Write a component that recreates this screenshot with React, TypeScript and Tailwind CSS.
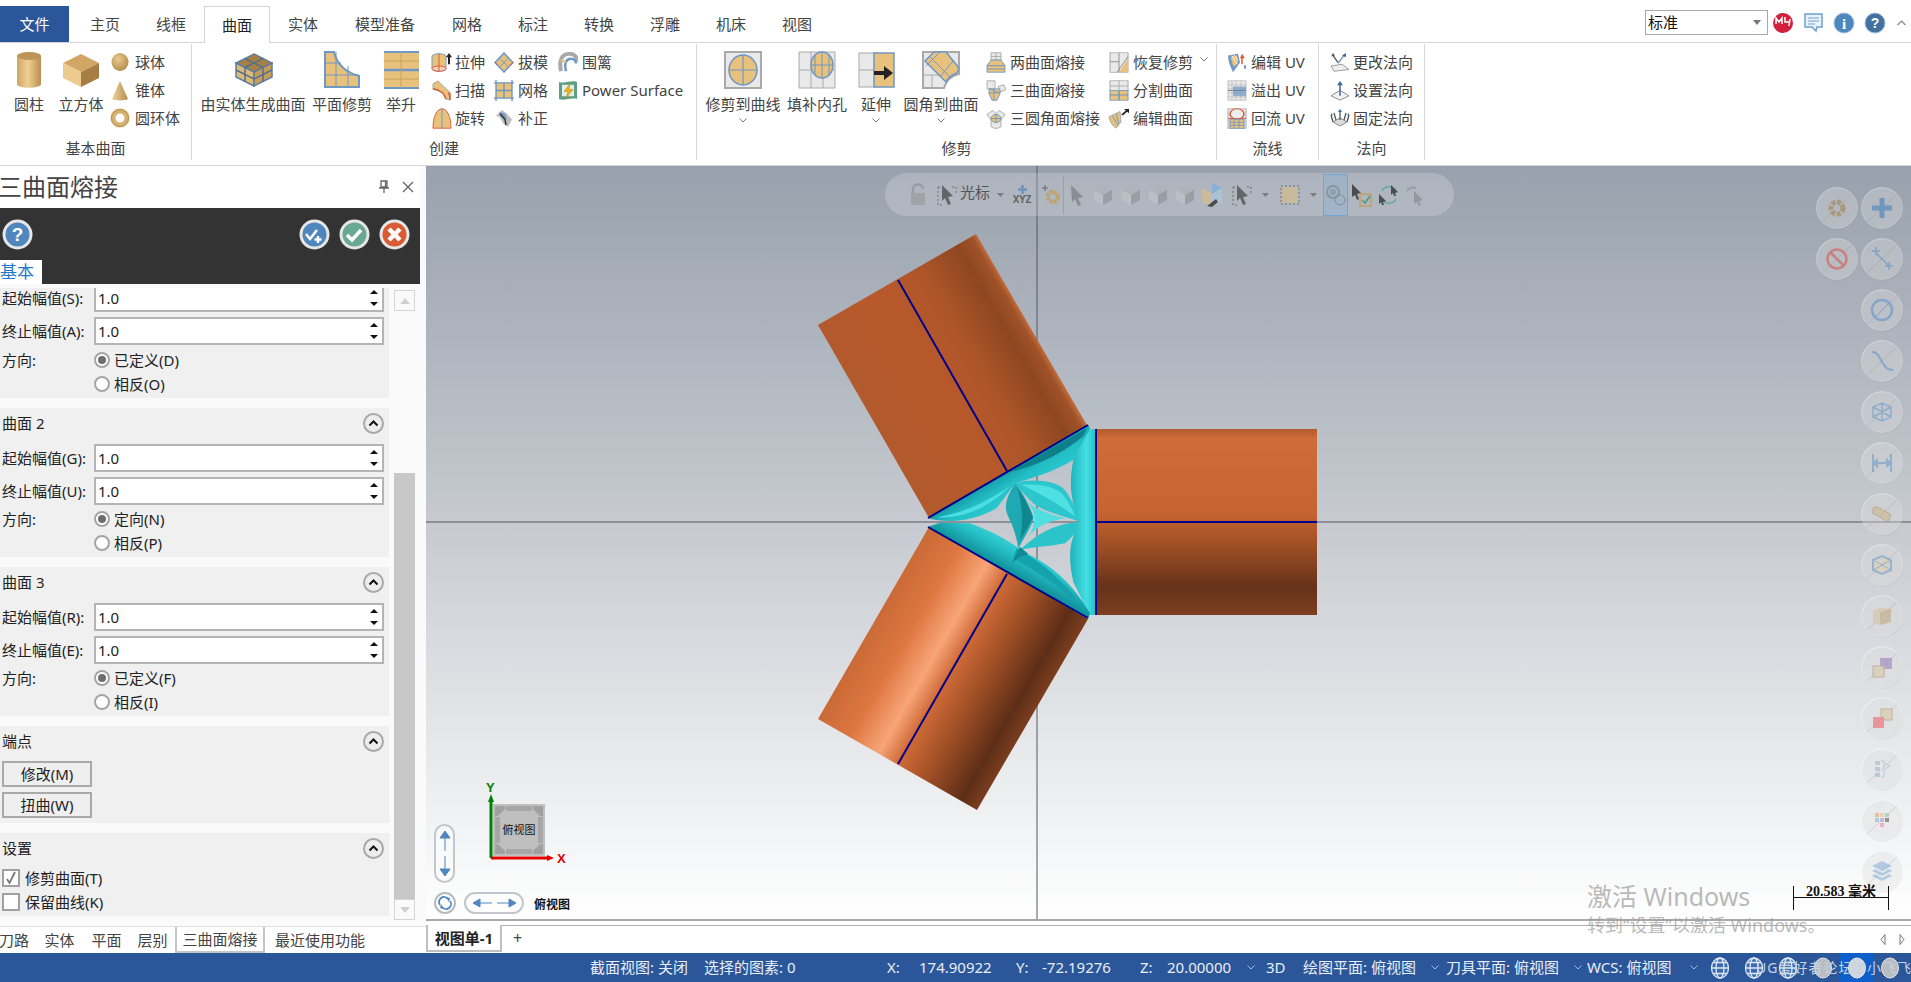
import React from "react";

const T = "#e8c17c";
const B = "#6f98c4";
const G = "#e9e9e9";
const S = "#a9a9a9";

function Ic({ w = 20, h = 20, children }: { w?: number; h?: number; children: React.ReactNode }) {
  return (
    <svg width={w} height={h} viewBox={`0 0 ${w} ${h}`} preserveAspectRatio="none" className="block shrink-0">
      {children}
    </svg>
  );
}

const Cylinder = () => (
  <Ic w={26} h={38}>
    <defs>
      <linearGradient id="cy">
        <stop offset="0" stopColor="#cfa566" />
        <stop offset=".45" stopColor="#efcf92" />
        <stop offset="1" stopColor="#b98f52" />
      </linearGradient>
    </defs>
    <path d="M1 5v28c0 5 24 5 24 0V5z" fill="url(#cy)" />
    <ellipse cx="13" cy="5" rx="12" ry="4" fill="#bd9558" />
  </Ic>
);
const Cube = () => (
  <Ic w={38} h={33}>
    <path d="M19 0l18 9-18 9L1 9z" fill="#d2a766" />
    <path d="M1 9l18 9v15L1 24z" fill="#edcb8f" />
    <path d="M37 9L19 18v15l18-9z" fill="#a67d42" />
  </Ic>
);
const Sphere = () => (
  <Ic w={18} h={20}>
    <defs>
      <radialGradient id="sp" cx=".4" cy=".35" r=".7">
        <stop offset="0" stopColor="#eccb90" />
        <stop offset="1" stopColor="#b18849" />
      </radialGradient>
    </defs>
    <ellipse cx="9" cy="10" rx="8.5" ry="9" fill="url(#sp)" />
  </Ic>
);
const Cone = () => (
  <Ic w={18} h={22}>
    <defs>
      <linearGradient id="cn">
        <stop offset="0" stopColor="#f0d29b" />
        <stop offset="1" stopColor="#b58c4e" />
      </linearGradient>
    </defs>
    <path d="M9 1L17 20c-4 2-12 2-16 0z" fill="url(#cn)" />
  </Ic>
);
const Torus = () => (
  <Ic w={20} h={20}>
    <circle cx="10" cy="10" r="7" fill="none" stroke="#d7b171" strokeWidth="5" />
    <circle cx="10" cy="10" r="8.5" fill="none" stroke="#b9924f" strokeWidth="1" />
  </Ic>
);
const SolidCube = () => (
  <Ic w={39} h={34}>
    <path d="M20 1l18 9-18 9L2 10z" fill="#a98043" stroke="#5c7f9f" strokeWidth="1.5" />
    <path d="M2 10l18 9v14L2 24z" fill="#e0b976" stroke="#5c7f9f" strokeWidth="1.5" />
    <path d="M38 10L20 19v14l18-9z" fill="#c79c5a" stroke="#5c7f9f" strokeWidth="1.5" />
    <path d="M11 5.500l18 9M29 5.500l-18 9M11 14.500v14M29 14.500v14M2 17l18 9 18-9" stroke="#4f708f" strokeWidth="1.500" fill="none" />
  </Ic>
);
const PlaneTrim = () => (
  <Ic w={36} h={38}>
    <path d="M1 1h9c3 12 10 20 25 24v11H1z" fill={T} stroke={B} strokeWidth="2" />
    <path d="M1 12h16M1 24h34M12 1v35M24 15v21" stroke={B} strokeWidth="1" fill="none" />
  </Ic>
);
const Loft = () => (
  <Ic w={35} h={38}>
    <rect x="0" y="1" width="35" height="36" fill={T} />
    <path d="M0 1h35M0 37h35" stroke={B} strokeWidth="2" />
    <path d="M0 19h35" stroke={B} strokeWidth="2.500" />
    <path d="M0 10h35M0 28h35M17 1v18M17 19v18" stroke="#c8a262" strokeWidth="1" />
  </Ic>
);
const TrimCurve = () => (
  <Ic w={38} h={38}>
    <rect x="1" y="1" width="36" height="36" fill={G} stroke={S} strokeWidth="2" />
    <ellipse cx="19" cy="19" rx="14" ry="15" fill={T} stroke={B} strokeWidth="1.500" />
    <path d="M19 4v30M5 19h28" stroke={B} strokeWidth="1.200" />
  </Ic>
);
const FillHoles = () => (
  <Ic w={38} h={38}>
    <rect x="1" y="1" width="36" height="36" fill={G} />
    <path d="M1 19h36M1 1h36v36H1zM13 19v18M25 19v18M13 1v18" stroke={S} strokeWidth="1" fill="none" />
    <ellipse cx="24" cy="14" rx="11" ry="13" fill={T} stroke={B} strokeWidth="1.500" />
    <path d="M24 1v26M13 14h22M17 3v22M31 3v22" stroke={B} strokeWidth="1" fill="none" />
  </Ic>
);
const Extend = () => (
  <Ic w={37} h={38}>
    <rect x="1" y="2" width="17" height="34" fill={G} stroke={S} />
    <path d="M1 19h17" stroke={S} />
    <rect x="16" y="2" width="20" height="34" fill={T} stroke={B} strokeWidth="1.500" />
    <path d="M16 20h10v-5l9 7-9 7v-5H16z" fill="#222" />
  </Ic>
);
const FilletSurf = () => (
  <Ic w={38} h={38}>
    <path d="M1 1h36v22c-9 2-13 7-15 14H1z" fill={G} stroke={S} strokeWidth="2" />
    <path d="M1 24h21M10 24v13M26 1v12" stroke={S} strokeWidth="1" fill="none" />
    <path d="M3 10L12 1h12l13 16-2 5c-6 2-9 5-11 9z" fill={T} stroke={B} strokeWidth="1.500" />
    <path d="M8 6l21 21M18 1L4 15M31 10L18 26" stroke={B} strokeWidth="1" fill="none" />
  </Ic>
);
const Extrude = () => (
  <Ic w={21} h={24}>
    <ellipse cx="8" cy="5" rx="7" ry="3" fill={T} stroke={B} />
    <path d="M1 5v14c0 4 14 4 14 0V5" fill={T} stroke={B} />
    <ellipse cx="8" cy="19" rx="7" ry="3" fill="#f3d0b8" stroke="#d9573a" />
    <path d="M8 2v20" stroke="#d9573a" />
    <path d="M18 14V5" stroke="#222" strokeWidth="2" />
    <path d="M15 6l3-5 3 5z" fill="#222" />
  </Ic>
);
const Draft = () => (
  <Ic w={20} h={22}>
    <path d="M10 1l9 10-9 10-9-10z" fill={T} stroke={B} strokeWidth="1.500" />
    <path d="M5 6l10 10M15 6L5 16" stroke={B} />
    <path d="M1 11l3 3M19 11l-3 3" stroke="#d9573a" />
  </Ic>
);
const Fence = () => (
  <Ic w={20} h={22}>
    <path d="M3 20C1 10 3 3 10 2c6-1 9 3 9 8" fill="none" stroke="#a8a8a8" strokeWidth="4" />
    <path d="M8 20c-2-8 0-13 5-13 3 0 5 2 5 5" fill="none" stroke={B} strokeWidth="2.500" />
    <path d="M3 8l5 3" stroke={T} strokeWidth="2" />
  </Ic>
);
const Sweep = () => (
  <Ic w={20} h={22}>
    <path d="M1 4l5-3 13 13-1 7-4-1C12 13 7 11 1 10z" fill={T} stroke={S} />
    <path d="M1 9c6 1 11 4 13 11M18 21c0-5-1-7-2-8" fill="none" stroke="#d9573a" strokeWidth="1.500" />
  </Ic>
);
const Net = () => (
  <Ic w={20} h={22}>
    <rect x="2" y="3" width="16" height="16" fill={T} />
    <path d="M0 3h20M0 19h20M2 0v22M18 0v22M10 3v16M2 11h16" stroke={B} strokeWidth="1.400" />
  </Ic>
);
const PowerS = () => (
  <Ic w={20} h={22}>
    <path d="M1 2c6 2 12-2 18 0v18c-6-2-12 2-18 0z" fill="#5f9f85" />
    <path d="M4 5h12v12H4z" fill="#dff0ea" />
    <path d="M12 4L6 12h4l-2 7 7-9h-4z" fill="#f2b21b" stroke="#b9790e" strokeWidth=".5" />
  </Ic>
);
const Revolve = () => (
  <Ic w={20} h={26}>
    <path d="M1 25C1 10 5 1 10 1s9 9 9 24z" fill={T} stroke="#d9573a" />
    <path d="M10 1v24" stroke={B} />
  </Ic>
);
const Patch = () => (
  <Ic w={20} h={22}>
    <path d="M2 8l6-6 5 4 5 6-4 8-5-4-3-6z" fill="#bdbdbd" />
    <path d="M5 4l6 2 2 6-5-2z" fill={B} />
    <path d="M6 6l5 6 1 6" stroke="#333" strokeWidth="1.500" fill="none" />
  </Ic>
);
const Blend2 = () => (
  <Ic w={20} h={26}>
    <path d="M5 1h10v9H5z" fill={G} stroke={S} />
    <path d="M5 5.500h10M10 1v9" stroke={S} />
    <path d="M5 10h10l4 7H1z" fill={T} stroke={B} />
    <path d="M1 17h18v8H1z" fill={T} stroke={B} />
    <path d="M1 21h18" stroke={B} />
  </Ic>
);
const Blend3 = () => (
  <Ic w={20} h={26}>
    <path d="M1 1h8v10H1z" fill={G} stroke={S} />
    <path d="M12 8l6-2 2 6-6 3z" fill={G} stroke={S} />
    <path d="M3 11h11v6l-3 8H6l-3-8z" fill={T} stroke={B} />
    <path d="M3 16h11M8 11v14M3 11l11 5" stroke={B} />
  </Ic>
);
const BlendF = () => (
  <Ic w={20} h={26}>
    <path d="M1 8l6-5 3 4 3-4 6 5-4 7v8l-3 2H8l-3-2v-8z" fill={G} stroke={S} />
    <circle cx="10" cy="13" r="5" fill={T} stroke={B} />
    <path d="M10 8v10M5 13h10" stroke={B} />
  </Ic>
);
const Restore = () => (
  <Ic w={20} h={28}>
    <rect x="1" y="1" width="18" height="26" fill={G} stroke={S} />
    <path d="M10 27L19 8v19z" fill={T} />
    <path d="M1 13h9M10 1v26M8 27l11-21" stroke="#888" fill="none" />
  </Ic>
);
const Split = () => (
  <Ic w={20} h={28}>
    <rect x="1" y="1" width="18" height="13" fill={G} stroke={S} />
    <path d="M10 1v13M1 8h18" stroke={S} />
    <rect x="1" y="14" width="18" height="13" fill={T} stroke={B} />
    <path d="M1 20h18M10 14v13" stroke={B} strokeWidth="1.500" />
  </Ic>
);
const EditS = () => (
  <Ic w={22} h={24}>
    <path d="M1 10l11-6 1 12-5 7C4 20 2 16 1 10z" fill={T} stroke={S} />
    <path d="M4 8l6 12M8 6l3 12" stroke={B} />
    <path d="M14 8l5-5" stroke="#222" strokeWidth="2" />
    <path d="M16 1h5v5z" fill="#222" />
  </Ic>
);
const EditUV = () => (
  <Ic w={21} h={24}>
    <path d="M1 4l10-2 2 10-5 8-2 3C3 16 1 10 1 4z" fill={B} />
    <path d="M4 5l6-1 1 8-4 5C5 13 4 9 4 5z" fill={T} />
    <path d="M5 4l5 10M7 3l4 7" stroke="#fff" strokeWidth=".8" />
    <path d="M15 14V6" stroke="#d9573a" strokeWidth="1.500" />
    <path d="M13 7l2-5 3 5z" fill="#d9573a" />
    <path d="M17 15h2v4h-2z" fill={B} />
  </Ic>
);
const OverUV = () => (
  <Ic w={20} h={26}>
    <rect x="1" y="1" width="18" height="24" fill={G} stroke="#bdbdbd" />
    <path d="M1 6h18M1 11h18M1 16h18M1 21h18M5 1v24M9 1v24M14 1v24" stroke="#b5b5b5" strokeWidth=".7" />
    <rect x="6" y="8" width="13" height="12" fill={B} opacity=".7" />
    <path d="M1 13h18" stroke="#5d7fa0" />
  </Ic>
);
const ReUV = () => (
  <Ic w={20} h={28}>
    <rect x="1" y="1" width="18" height="26" fill={G} stroke={S} />
    <circle cx="10" cy="8" r="7" fill="#eee" stroke="#d9573a" strokeWidth="1.500" />
    <path d="M1 14h18" stroke="#d9573a" />
    <rect x="3" y="15" width="14" height="12" fill={T} stroke={B} />
    <path d="M3 19h14M3 23h14M7 15v12M12 15v12" stroke={B} />
  </Ic>
);
const ChangeN = () => (
  <Ic w={20} h={24}>
    <path d="M4 22l-3-6 11-2 7 6z" fill="#eee" stroke="#999" />
    <path d="M8 12L3 4" stroke="#555" strokeWidth="1.500" />
    <path d="M8 13l6-9" stroke={B} strokeWidth="1.500" />
    <path d="M12 4l4-3v5z" fill="#3d6a9c" />
    <path d="M1 5l2-4 2 3z" fill="#555" />
  </Ic>
);
const SetN = () => (
  <Ic w={20} h={24}>
    <path d="M10 12l9 6-9 5-9-5z" fill="#f2f2f2" stroke="#888" />
    <path d="M10 18V5" stroke="#3d6a9c" strokeWidth="1.500" />
    <path d="M7 6l3-5 3 5z" fill="#3d6a9c" />
  </Ic>
);
const FixN = () => (
  <Ic w={20} h={20}>
    <path d="M3 14l7 4 7-4-7-4z" fill="#ddd" stroke="#888" />
    <path d="M3 14L1 7M17 14l2-7M10 12V3M6 12L4 5M14 12l2-7" stroke="#555" strokeWidth="1.300" />
    <path d="M10 1l2 3H8zM1 5l2 2-2 1zM19 5l-2 2 2 1z" fill="#3d6a9c" />
  </Ic>
);

function Large({ w, icon, label, chev }: { w: string; icon: React.ReactNode; label: string; chev?: boolean }) {
  return (
    <div className={`${w} flex flex-col items-center pt-[7px]`}>
      <div className="h-[38px] flex items-center">{icon}</div>
      <div className="mt-[5px] h-[20px] leading-[20px] whitespace-nowrap">{label}</div>
      {chev && <Chev className="mt-[4px]" />}
    </div>
  );
}
function Chev({ className = "", color = "#777" }: { className?: string; color?: string }) {
  return (
    <svg width="8" height="5" viewBox="0 0 8 5" className={`block shrink-0 ${className}`}>
      <path d="M.5.500L4 4 7.500.500" fill="none" stroke={color} />
    </svg>
  );
}
function Small({ icon, label, iw = "w-[20px]", gap = "mr-[4px]", chev }: { icon: React.ReactNode; label: string; iw?: string; gap?: string; chev?: boolean }) {
  return (
    <div className="flex items-center h-[28px] whitespace-nowrap">
      <div className={`${iw} ${gap} flex justify-center items-center shrink-0 [&>svg]:max-h-[21px]`}>{icon}</div>
      <span>{label}</span>
      {chev && <Chev className="ml-[7px] -mt-[6px]" />}
    </div>
  );
}
function Group({ w, label, children }: { w: string; label: string; children: React.ReactNode }) {
  return (
    <div className={`${w} h-[116px] shrink-0 flex flex-col border-r border-[#d8d8d8]`}>
      <div className="h-[92px] flex">{children}</div>
      <div className="h-[24px] leading-[24px] text-center">{label}</div>
    </div>
  );
}

function Field({ label }: { label: string }) {
  return (
    <div className="flex items-center">
      <div className="w-[94px] pl-[2px] whitespace-nowrap">{label}</div>
      <div className="w-[290px] h-[28px] bg-white border-2 border-[#b4b4b4] flex items-center justify-between pl-[2px] pr-[3px]">
        <span>1.0</span>
        <svg width="10" height="20" viewBox="0 0 10 20" className="block">
          <path d="M5 2l4 4H1zM5 18l4-4H1z" fill="#111" />
        </svg>
      </div>
    </div>
  );
}
function Radio({ on, label, side }: { on?: boolean; label: string; side?: string }) {
  return (
    <div className="h-[24px] flex items-center">
      <div className="w-[94px] pl-[2px] whitespace-nowrap">{side}</div>
      <span className="w-[16px] h-[16px] rounded-full border-2 border-[#a5a5a5] bg-white flex items-center justify-center">
        {on && <span className="w-[8px] h-[8px] rounded-full bg-[#6e6e6e]" />}
      </span>
      <span className="ml-[4px]">{label}</span>
    </div>
  );
}
function Header({ label }: { label: string }) {
  return (
    <div className="h-[30px] flex items-center justify-between pl-[2px] pr-[5px]">
      <span>{label}</span>
      <span className="w-[21px] h-[21px] rounded-full border-2 border-[#a8a8a8] bg-[#ededed] flex items-center justify-center">
        <svg width="11" height="7" viewBox="0 0 11 7" className="block">
          <path d="M1.500 5.500l4-4 4 4" fill="none" stroke="#111" strokeWidth="2" />
        </svg>
      </span>
    </div>
  );
}
function Btn({ label }: { label: string }) {
  return (
    <div className="ml-[2px] w-[90px] h-[26px] border-2 border-[#a9a9a9] bg-[#efefef] flex items-center justify-center">{label}</div>
  );
}
function Check({ on, label }: { on?: boolean; label: string }) {
  return (
    <div className="h-[24px] flex items-center pl-[2px]">
      <span className="w-[18px] h-[18px] border-2 border-[#a0a0a0] bg-white flex items-center justify-center">
        {on && (
          <svg width="12" height="14" viewBox="0 0 12 14" className="block">
            <path d="M2 8l2.500 4L10 1" fill="none" stroke="#777" strokeWidth="1.800" />
          </svg>
        )}
      </span>
      <span className="ml-[5px]">{label}</span>
    </div>
  );
}
function ActionIcon({ color, children }: { color: string; children: React.ReactNode }) {
  return (
    <svg width="31" height="31" viewBox="0 0 31 31" className="block">
      <circle cx="15.500" cy="15.500" r="13.500" fill={color} stroke="#e6e6e6" strokeWidth="3" />
      {children}
    </svg>
  );
}

function RoundBtn({ children }: { children: React.ReactNode }) {
  return (
    <svg width="43" height="43" viewBox="0 0 43 43" className="block">
      <circle cx="21.500" cy="22" r="20.500" fill="#000" opacity=".07" />
      <circle cx="21" cy="21" r="20.500" fill="#fff" fillOpacity=".32" stroke="#fff" strokeOpacity=".25" />
      <path d="M6 35L36 7" stroke="#888" strokeOpacity=".25" />
      <g opacity=".72">{children}</g>
    </svg>
  );
}

function Globe({ kind }: { kind: number }) {
  return (
    <svg width="22" height="24" viewBox="0 0 22 24" className="block">
      {kind < 3 ? (
        <g fill="none" stroke="#dfe8f5" strokeWidth="1.300">
          <ellipse cx="11" cy="12" rx="8.500" ry="10" fill="#3b6cb0" />
          <ellipse cx="11" cy="12" rx="4" ry="10" />
          <path d="M2.500 12h17M4 6.500h14M4 17.500h14" />
        </g>
      ) : (
        <ellipse cx="11" cy="12" rx="8.500" ry="10" fill={kind === 4 ? "#cfd6de" : "#b9bcc0"} stroke="#e3e5e8" />
      )}
    </svg>
  );
}

function Scene() {
  return (
    <svg className="absolute inset-0 w-full h-full" viewBox="426 166 1485 753" preserveAspectRatio="none">
      <defs>
        <linearGradient id="cr" gradientUnits="userSpaceOnUse" x1="0" y1="429" x2="0" y2="615">
          <stop offset="0" stopColor="#b25a2d" />
          <stop offset=".05" stopColor="#cf6c38" />
          <stop offset=".45" stopColor="#c56431" />
          <stop offset=".6" stopColor="#a65226" />
          <stop offset=".85" stopColor="#65321a" />
          <stop offset="1" stopColor="#7d3f1f" />
        </linearGradient>
        <linearGradient id="cu" gradientUnits="userSpaceOnUse" x1="818" y1="325" x2="976" y2="234">
          <stop offset="0" stopColor="#b25a2d" />
          <stop offset=".4" stopColor="#b9592b" />
          <stop offset=".65" stopColor="#ad5529" />
          <stop offset=".88" stopColor="#8e4721" />
          <stop offset=".97" stopColor="#a05228" />
          <stop offset="1" stopColor="#c06a3a" />
        </linearGradient>
        <linearGradient id="cl" gradientUnits="userSpaceOnUse" x1="818" y1="719" x2="977" y2="810">
          <stop offset="0" stopColor="#c96a36" />
          <stop offset=".2" stopColor="#de7640" />
          <stop offset=".38" stopColor="#f8a578" />
          <stop offset=".5" stopColor="#cf6a37" />
          <stop offset=".7" stopColor="#9a4c24" />
          <stop offset=".9" stopColor="#5d2e17" />
          <stop offset="1" stopColor="#7a3d1e" />
        </linearGradient>
        <linearGradient id="t1" gradientUnits="userSpaceOnUse" x1="300" y1="200" x2="360" y2="300">
          <stop offset="0" stopColor="#128b95" />
          <stop offset=".5" stopColor="#22bcc5" />
          <stop offset="1" stopColor="#2cced2" />
        </linearGradient>
        <linearGradient id="t2" gradientUnits="userSpaceOnUse" x1="510" y1="0" x2="587" y2="0">
          <stop offset="0" stopColor="#1eb2bb" />
          <stop offset=".65" stopColor="#43dfe3" />
          <stop offset="1" stopColor="#22bec7" />
        </linearGradient>
        <linearGradient id="t3" gradientUnits="userSpaceOnUse" x1="350" y1="530" x2="400" y2="440">
          <stop offset="0" stopColor="#12909a" />
          <stop offset=".5" stopColor="#24bec6" />
          <stop offset="1" stopColor="#3fdadd" />
        </linearGradient>
      </defs>
      <path d="M1037 166V921" stroke="#55595e" strokeWidth="1" />
      <path d="M426 522H1911" stroke="#55595e" strokeWidth="1" />
      <path d="M818 325L976 234 1088 427 929 518z" fill="url(#cu)" />
      <path d="M929 527L1088 619 977 810 818 719z" fill="url(#cl)" />
      <rect x="1096" y="429" width="221" height="186" fill="url(#cr)" />
      <g transform="translate(900 400) scale(.3333)">
        <path d="M565 75L85 355C150 372 225 362 290 325L345 250C420 228 480 205 520 180 545 135 565 105 570 85z" fill="url(#t1)" />
        <path d="M560 85L330 215C420 198 500 150 550 108z" fill="#0f7f8a" />
        <path d="M110 352C180 342 250 312 330 258 280 312 200 358 110 352z" fill="#4adfe2" />
        <path d="M587 88H570C550 125 530 155 520 180 508 240 510 290 530 340L540 368C505 420 505 480 520 545 540 585 555 620 570 645H587z" fill="url(#t2)" />
        <path d="M85 380L565 655 570 640C530 570 470 500 370 455 340 430 280 395 210 370L120 368z" fill="url(#t3)" />
        <path d="M350 445C420 485 500 545 560 640 510 585 440 530 340 475z" fill="#14a3ad" />
        <path d="M345 250C400 232 470 245 490 265 515 295 530 330 540 365 500 350 440 340 400 310 380 290 360 270 345 250z" fill="#2cc6cc" />
        <path d="M365 255C410 250 460 258 485 280 505 305 520 330 525 350 490 320 420 280 365 255z" fill="#4fe0e3" />
        <path d="M345 250C320 290 310 320 325 350 340 380 350 410 355 445 380 400 400 370 400 350 385 310 365 270 345 250z" fill="#1fa9b2" />
        <path d="M350 262C365 300 372 360 360 420 378 390 395 365 398 350 385 315 368 285 350 262z" fill="#0f8791" />
        <path d="M540 365C480 370 420 390 360 450 400 440 450 440 495 430 520 410 535 385 540 365z" fill="#2ac4ca" />
        <path d="M380 305C400 320 430 340 500 355 450 360 410 380 385 410 410 370 410 335 380 305z" fill="#50dee1" />
        <path d="M335 490L360 440 385 462 360 470z" fill="#0f8a94" />
      </g>
      <g stroke="#00008b" strokeWidth="2" fill="none">
        <path d="M1088 425L928 518M928 527L1088 618M1096 429V615M1096 522H1317" />
        <path d="M898 280L1007 471M1007 574L898 764" />
      </g>
      <path d="M491 858V800" stroke="#008000" strokeWidth="3" />
      <path d="M488 802l3-8 3 8z" fill="#008000" />
      <path d="M491 858H548" stroke="#e00000" strokeWidth="3" />
      <path d="M547 855l7 3-7 3z" fill="#e00000" />
    </svg>
  );
}

const Tip = ({ c }: { c: React.ReactNode }) => <div className="w-[26px] h-[30px] flex items-center justify-center">{c}</div>;

function FloatBar() {
  const arrow = (
    <svg width="20" height="24" viewBox="0 0 20 24" className="block">
      <path d="M1 4v18h4M15 4h4v6M1 4h3" fill="none" stroke="#555" strokeDasharray="2 2" />
      <path d="M5 2l11 11-5 1 3 7-3 1-3-7-3 3z" fill="#444" />
    </svg>
  );
  const cube = (
    <svg width="22" height="24" viewBox="0 0 22 24" className="block">
      <path d="M11 2l9 5-9 5-9-5z" fill="#aeb3b8" />
      <path d="M2 7l9 5v10l-9-5z" fill="#bfc3c8" />
      <path d="M20 7l-9 5v10l9-5z" fill="#8f959c" />
    </svg>
  );
  const tri = (
    <svg width="7" height="4" viewBox="0 0 7 4" className="block"><path d="M0 0h7L3.500 4z" fill="#444" /></svg>
  );
  return (
    <div className="absolute left-[459px] top-[7px] w-[569px] h-[43px] rounded-full bg-white/20 flex items-center pl-[20px]">
      <div className="opacity-40"><Tip c={<svg width="18" height="24" viewBox="0 0 18 24" className="block"><path d="M4 10V6c0-6 10-6 10 0" fill="none" stroke="#777" strokeWidth="2.500" /><rect x="2" y="10" width="14" height="12" fill="#888" /></svg>} /></div>
      <div className="ml-[3px] opacity-70"><Tip c={arrow} /></div>
      <div className="w-[31px] text-[15px] text-[#555] whitespace-nowrap -mt-[4px]">光标</div>
      <div className="ml-[3px] w-[12px] flex justify-center opacity-50">{tri}</div>
      <div className="ml-[4px] w-[24px] flex flex-col items-center opacity-70">
        <svg width="9" height="9" viewBox="0 0 9 9" className="block"><path d="M4.500 0v9M0 4.500h9" stroke="#4f86bd" strokeWidth="2.500" /></svg>
        <span className="text-[10px] leading-[11px] font-bold text-[#444]">XYZ</span>
      </div>
      <div className="ml-[5px] w-[24px] flex justify-center opacity-70">
        <svg width="20" height="24" viewBox="0 0 20 24" className="block"><circle cx="12" cy="14" r="5" fill="none" stroke="#c59a4c" strokeWidth="4" strokeDasharray="3 1" /><path d="M1 5h6M4 2v6" stroke="#444" /></svg>
      </div>
      <div className="w-px h-[38px] bg-[#8c939b] opacity-60" />
      <div className="opacity-50"><Tip c={<svg width="16" height="24" viewBox="0 0 16 24" className="block"><path d="M2 2l12 12-5 1 3 7-3 1-3-7-3 3z" fill="#666" /></svg>} /></div>
      <div className="opacity-70"><Tip c={cube} /></div>
      <div className="ml-[2px] opacity-70"><Tip c={cube} /></div>
      <div className="ml-[1px] opacity-70"><Tip c={cube} /></div>
      <div className="ml-[1px] opacity-70"><Tip c={cube} /></div>
      <div className="ml-[1px] opacity-80">
        <Tip c={<svg width="22" height="26" viewBox="0 0 22 26" className="block"><path d="M11 1l10 5-10 6z" fill="#7fb0d8" /><path d="M1 6l10 6v13L1 20z" fill="#d4bd92" /><path d="M21 6l-10 6v13l10-5z" fill="#a9c6de" /><path d="M6 24l9-7 2 3-6 5z" fill="#333" /></svg>} />
      </div>
      <div className="ml-[4px] opacity-70"><Tip c={arrow} /></div>
      <div className="ml-[4px] w-[12px] flex justify-center opacity-50">{tri}</div>
      <div className="ml-[6px]">
        <Tip c={<svg width="22" height="24" viewBox="0 0 22 24" className="block"><rect x="3" y="4" width="16" height="16" fill="#cdbb96" opacity=".85" /><rect x="2" y="3" width="18" height="18" fill="none" stroke="#555" strokeDasharray="2 2" opacity=".7" /></svg>} />
      </div>
      <div className="ml-[4px] w-[12px] flex justify-center opacity-50">{tri}</div>
      <div className="ml-[4px] w-[25px] h-[42px] bg-[#7fb0dc]/30 border border-[#6fa6d8] flex items-center justify-center shrink-0">
        <svg width="22" height="24" viewBox="0 0 22 24" className="block opacity-50"><circle cx="8" cy="9" r="6" fill="none" stroke="#777" strokeWidth="2" /><circle cx="8" cy="9" r="3" fill="#888" /><circle cx="15" cy="17" r="5" fill="none" stroke="#666" /></svg>
      </div>
      <div className="ml-[1px] opacity-80"><Tip c={<svg width="22" height="24" viewBox="0 0 22 24" className="block"><path d="M1 1l9 9-4 1 2 5-2 1-2-5-3 2z" fill="#333" /><rect x="9" y="11" width="11" height="12" fill="none" stroke="#c59a4c" strokeWidth="1.500" /><path d="M11 17l3 3 5-7" stroke="#3a8f76" fill="none" strokeWidth="1.500" /></svg>} /></div>
      <div className="ml-[1px] opacity-80"><Tip c={<svg width="22" height="24" viewBox="0 0 22 24" className="block"><path d="M4 8a8 8 0 0 1 14 0M18 16a8 8 0 0 1-14 0" fill="none" stroke="#4fa78d" strokeWidth="1.500" /><path d="M1 11l7 7-3 1 1 3-2 0-1-3-2 2z" fill="#333" /><path d="M13 2l7 7-3 1 1 3-2 0-1-3-2 2z" fill="#333" /></svg>} /></div>
      <div className="opacity-30"><Tip c={<svg width="22" height="24" viewBox="0 0 22 24" className="block"><path d="M3 8a8 8 0 0 1 9-3" fill="none" stroke="#666" strokeWidth="2" /><path d="M10 8l9 9-4 1 2 4-2 1-2-4-3 2z" fill="#555" /></svg>} /></div>
    </div>
  );
}

export default function App() {
  const rightCol: React.ReactNode[] = [
    <path key="a" d="M21 11v20M11 21h20" stroke="#3f7fc0" strokeWidth="5" opacity=".8" />,
    <path key="b" d="M11 13h8M15 9v8M24 28h8M28 24v8M15 15l12 12" stroke="#5d8fc4" strokeWidth="1.500" fill="none" opacity=".8" />,
    <g key="c" fill="none" stroke="#5d94cc" strokeWidth="2.500" opacity=".8"><ellipse cx="21" cy="21" rx="10" ry="10" /><path d="M15 28L28 14" strokeWidth="1" /></g>,
    <path key="d" d="M11 12c6 0 7 5 10 10s5 8 11 8" fill="none" stroke="#5d94cc" strokeWidth="2" opacity=".8" />,
    <path key="e" d="M12 16l9-4 9 4v10l-9 4-9-4zM12 16l18 10M30 16L12 26M21 12v18" fill="none" stroke="#5d94cc" strokeWidth="1.500" opacity=".7" />,
    <path key="f" d="M12 12v18M30 12v18M12 21h18M12 21l4-3v6zM30 21l-4-3v6z" fill="none" stroke="#5d94cc" strokeWidth="2" opacity=".7" />,
    <path key="g" d="M12 15c6-3 8 2 12 3l6 4-3 7c-5-1-8-7-15-8z" fill="#cdb68a" stroke="#a8946e" opacity=".8" />,
    <g key="h" opacity=".7"><path d="M12 16l9-4 9 4v10l-9 4-9-4z" fill="#e2cfa8" stroke="#5d94cc" strokeWidth="2" /><path d="M12 16l18 10M30 16L12 26" stroke="#5d94cc" /></g>,
    <g key="i" opacity=".8"><path d="M12 16l7-3 11 1v13l-11 3-7-2z" fill="#d8c4a0" /><path d="M19 30V17l11-3v13z" fill="#bfa983" /></g>,
    <g key="j" opacity=".8"><rect x="19" y="12" width="12" height="11" fill="#9c7fbd" /><rect x="12" y="20" width="11" height="11" fill="#dcc9a2" stroke="#a8946e" /></g>,
    <g key="k" opacity=".8"><rect x="20" y="12" width="11" height="11" fill="#dcc9a2" stroke="#a8946e" /><rect x="12" y="20" width="11" height="11" fill="#ef5f68" /></g>,
    <g key="l" opacity=".7"><path d="M14 13h5v4h-5zM14 19h5v4h-5zM14 25h5v4h-5z" fill="#8fb4d8" /><path d="M20 13h3v16h-3" fill="none" stroke="#8fb4d8" /><path d="M24 15l5 3-5 3" fill="none" stroke="#8fb4d8" /></g>,
    <g key="m" opacity=".8"><rect x="14" y="14" width="4" height="4" fill="#e79a7a" /><rect x="19" y="14" width="4" height="4" fill="#e2c97a" /><rect x="24" y="14" width="4" height="4" fill="#8cc6a0" /><rect x="14" y="19" width="4" height="4" fill="#8fb4d8" /><rect x="19" y="19" width="4" height="4" fill="#b39ad0" /><rect x="24" y="19" width="4" height="4" fill="#555" /><rect x="19" y="24" width="4" height="4" fill="#e78ab0" /></g>,
    <g key="n" opacity=".8"><path d="M21 11l10 5-10 5-10-5z" fill="#88b0d8" /><path d="M11 21l10 5 10-5-3-2-7 4-7-4z" fill="#88b0d8" /><path d="M11 26l10 5 10-5-3-2-7 4-7-4z" fill="#88b0d8" /></g>,
  ];
  return (
    <div className="w-[1911px] h-[982px] overflow-hidden bg-white flex flex-col text-[15px] text-[#444] font-['Noto_Sans','Noto_Sans_CJK_SC',sans-serif] relative">
      {/* Tabs */}
      <div className="h-[43px] shrink-0 flex items-end border-b border-[#d5d5d5] relative">
        <div className="w-[69px] h-[36px] mr-[3px] bg-[#2b579a] text-white flex items-center justify-center">文件</div>
        {["主页", "线框", "曲面", "实体", "模型准备", "网格", "标注", "转换", "浮雕", "机床", "视图"].map((t) => (
          <div
            key={t}
            className={`${t === "模型准备" ? "w-[98px]" : "w-[66px]"} ${t === "曲面" ? "h-[37px] bg-white border border-b-0 border-[#d5d5d5] text-[#222] -mb-px" : "h-[36px]"} flex items-center justify-center`}
          >
            {t}
          </div>
        ))}
        <div className="ml-auto self-start mt-[10px] flex items-center pr-[5px]">
          <div className="w-[123px] h-[25px] border border-[#a8a8a8] bg-white flex items-center justify-between pl-[2px] pr-[6px] text-[#111] text-[15px]">
            <span>标准</span>
            <svg width="8" height="5" viewBox="0 0 8 5" className="block"><path d="M0 0h8L4 5z" fill="#777" /></svg>
          </div>
          <svg width="22" height="22" viewBox="0 0 22 22" className="block ml-[4px]">
            <circle cx="11" cy="11" r="10" fill="#d3203f" />
            <path d="M4 12V6l3 4 3-4v6M13 5v5h4M18 7l-1 7" stroke="#fff" strokeWidth="1.500" fill="none" />
          </svg>
          <svg width="21" height="22" viewBox="0 0 21 22" className="block ml-[9px]">
            <path d="M2 2h17v13h-5l-1 4-4-4H2z" fill="#eaf2fa" stroke="#6f9fcd" strokeWidth="1.500" />
            <path d="M5 6h11M5 9h11M5 12h7" stroke="#6f9fcd" />
          </svg>
          <svg width="22" height="22" viewBox="0 0 22 22" className="block ml-[9px]">
            <circle cx="11" cy="11" r="10" fill="#4f86bd" stroke="#9dbfe0" />
            <text x="11" y="16.500" textAnchor="middle" fontSize="15" fontWeight="700" fill="#fff" fontFamily="Liberation Serif, serif">i</text>
          </svg>
          <svg width="22" height="22" viewBox="0 0 22 22" className="block ml-[9px]">
            <circle cx="11" cy="11" r="10" fill="#44719f" stroke="#9dbfe0" />
            <text x="11" y="16" textAnchor="middle" fontSize="14" fontWeight="700" fill="#fff" fontFamily="Liberation Sans, sans-serif">?</text>
          </svg>
          <svg width="9" height="6" viewBox="0 0 9 6" className="block ml-[11px]"><path d="M.5 5L4.500 1l4 4" fill="none" stroke="#888" strokeWidth="1.200" /></svg>
        </div>
      </div>

      {/* Ribbon */}
      <div className="h-[123px] shrink-0 pt-[1px] flex border-b border-[#d5d5d5] bg-white">
        <Group w="w-[192px]" label="基本曲面">
          <Large w="w-[58px]" icon={<Cylinder />} label="圆柱" />
          <Large w="w-[46px]" icon={<Cube />} label="立方体" />
          <div className="ml-[6px] pt-[4px]">
            <Small icon={<Sphere />} label="球体" iw="w-[20px]" gap="mr-[5px]" />
            <Small icon={<Cone />} label="锥体" gap="mr-[5px]" />
            <Small icon={<Torus />} label="圆环体" gap="mr-[5px]" />
          </div>
        </Group>
        <Group w="w-[505px]" label="创建">
          <Large w="w-[110px] ml-[6px]" icon={<SolidCube />} label="由实体生成曲面" />
          <Large w="w-[68px]" icon={<PlaneTrim />} label="平面修剪" />
          <Large w="w-[50px]" icon={<Loft />} label="举升" />
          <div className="ml-[5px] pt-[4px] w-[63px]">
            <Small icon={<Extrude />} label="拉伸" iw="w-[21px]" gap="mr-[3px]" />
            <Small icon={<Sweep />} label="扫描" iw="w-[21px]" gap="mr-[3px]" />
            <Small icon={<Revolve />} label="旋转" iw="w-[21px]" gap="mr-[3px]" />
          </div>
          <div className="pt-[4px] w-[63px]">
            <Small icon={<Draft />} label="拔模" />
            <Small icon={<Net />} label="网格" />
            <Small icon={<Patch />} label="补正" />
          </div>
          <div className="pt-[4px]">
            <Small icon={<Fence />} label="围篱" iw="w-[21px]" />
            <Small icon={<PowerS />} label="Power Surface" iw="w-[21px]" />
          </div>
        </Group>
        <Group w="w-[520px]" label="修剪">
          <Large w="w-[76px] ml-[8px]" icon={<TrimCurve />} label="修剪到曲线" chev />
          <Large w="w-[72px]" icon={<FillHoles />} label="填补内孔" />
          <Large w="w-[46px]" icon={<Extend />} label="延伸" chev />
          <Large w="w-[84px]" icon={<FilletSurf />} label="圆角到曲面" chev />
          <div className="ml-[3px] pt-[4px] w-[123px]">
            <Small icon={<Blend2 />} label="两曲面熔接" />
            <Small icon={<Blend3 />} label="三曲面熔接" />
            <Small icon={<BlendF />} label="三圆角面熔接" />
          </div>
          <div className="pt-[4px]">
            <Small icon={<Restore />} label="恢复修剪" chev />
            <Small icon={<Split />} label="分割曲面" />
            <Small icon={<EditS />} label="编辑曲面" />
          </div>
        </Group>
        <Group w="w-[102px]" label="流线">
          <div className="ml-[10px] pt-[4px]">
            <Small icon={<EditUV />} label="编辑 UV" />
            <Small icon={<OverUV />} label="溢出 UV" />
            <Small icon={<ReUV />} label="回流 UV" />
          </div>
        </Group>
        <Group w="w-[106px]" label="法向">
          <div className="ml-[11px] pt-[4px]">
            <Small icon={<ChangeN />} label="更改法向" gap="mr-[3px]" />
            <Small icon={<SetN />} label="设置法向" gap="mr-[3px]" />
            <Small icon={<FixN />} label="固定法向" gap="mr-[3px]" />
          </div>
        </Group>
      </div>

      {/* Main */}
      <div className="flex-1 flex min-h-0">
        {/* Left panel */}
        <div className="w-[426px] shrink-0 bg-[#fafafa] flex flex-col text-[#222]">
          <div className="w-[420px] h-[42px] shrink-0 bg-white flex items-center justify-between pr-[6px]">
            <span className="text-[24px] leading-[42px] -ml-[2px] text-[#444] whitespace-nowrap">三曲面熔接</span>
            <div className="flex items-center gap-[12px]">
              <svg width="12" height="14" viewBox="0 0 12 14" className="block"><path d="M3 1h6v6H3zM1 8h10M6 8v5M7.500 1v6" fill="none" stroke="#666" strokeWidth="1.300" /></svg>
              <svg width="12" height="12" viewBox="0 0 12 12" className="block"><path d="M1 1l10 10M11 1L1 11" stroke="#666" strokeWidth="1.400" /></svg>
            </div>
          </div>
          <div className="w-[420px] h-[76px] shrink-0 bg-[#333] flex flex-col">
            <div className="h-[52px] flex items-center justify-between pl-[2px] pr-[10px]">
              <ActionIcon color="#4f86bd">
                <text x="15.500" y="22" textAnchor="middle" fontSize="19" fontWeight="700" fill="#fff" fontFamily="Liberation Sans, sans-serif">?</text>
              </ActionIcon>
              <div className="flex gap-[9px]">
                <ActionIcon color="#4f86bd"><path d="M7 15l4 5 7-9M19 17v7M15.500 20.500h7" fill="none" stroke="#fff" strokeWidth="2.500" /></ActionIcon>
                <ActionIcon color="#69a893"><path d="M8 16l5 5 9-10" fill="none" stroke="#fff" strokeWidth="3.500" /></ActionIcon>
                <ActionIcon color="#d95a33"><path d="M10 10l11 11M21 10L10 21" fill="none" stroke="#fff" strokeWidth="4.500" /></ActionIcon>
              </div>
            </div>
            <div className="w-[42px] h-[24px] bg-white text-[#1f78c8] text-[17px] leading-[24px] whitespace-nowrap">基本</div>
          </div>
          <div className="flex-1 min-h-0 flex">
            <div className="w-[389px] shrink-0 pt-[4px] flex flex-col gap-[10px] overflow-hidden">
              <div className="h-[110px] shrink-0 bg-[#f0f0f0] overflow-hidden">
                <div className="-mt-[4px]"><Field label="起始幅值(S):" /></div>
                <div className="mt-[5px]"><Field label="终止幅值(A):" /></div>
                <div className="mt-[3px]">
                  <Radio on label="已定义(D)" side="方向:" />
                  <Radio label="相反(O)" />
                </div>
              </div>
              <div className="h-[149px] shrink-0 bg-[#f0f0f0]">
                <Header label="曲面 2" />
                <div className="mt-[6px]"><Field label="起始幅值(G):" /></div>
                <div className="mt-[5px]"><Field label="终止幅值(U):" /></div>
                <div className="mt-[2px]">
                  <Radio on label="定向(N)" side="方向:" />
                  <Radio label="相反(P)" />
                </div>
              </div>
              <div className="h-[149px] shrink-0 bg-[#f0f0f0]">
                <Header label="曲面 3" />
                <div className="mt-[6px]"><Field label="起始幅值(R):" /></div>
                <div className="mt-[5px]"><Field label="终止幅值(E):" /></div>
                <div className="mt-[2px]">
                  <Radio on label="已定义(F)" side="方向:" />
                  <Radio label="相反(I)" />
                </div>
              </div>
              <div className="h-[97px] shrink-0 bg-[#f0f0f0]">
                <Header label="端点" />
                <div className="mt-[5px] flex flex-col gap-[5px]">
                  <Btn label="修改(M)" />
                  <Btn label="扭曲(W)" />
                </div>
              </div>
              <div className="h-[83px] shrink-0 bg-[#f0f0f0]">
                <Header label="设置" />
                <div className="mt-[3px]">
                  <Check on label="修剪曲面(T)" />
                  <Check label="保留曲线(K)" />
                </div>
              </div>
            </div>
            <div className="w-[21px] ml-[5px] pt-[6px] flex flex-col">
              <div className="h-[21px] border border-[#d5d5d5] bg-[#fafafa] flex items-center justify-center">
                <svg width="10" height="6" viewBox="0 0 10 6" className="block"><path d="M5 0l5 6H0z" fill="#d0d0d0" /></svg>
              </div>
              <div className="h-[162px]" />
              <div className="h-[426px] bg-[#c8c8c8]" />
              <div className="h-[21px] border border-[#d5d5d5] bg-[#fafafa] flex items-center justify-center">
                <svg width="10" height="6" viewBox="0 0 10 6" className="block"><path d="M5 6l5-6H0z" fill="#d0d0d0" /></svg>
              </div>
            </div>
          </div>
          <div className="h-[27px] shrink-0 border-t border-[#e0e0e0] bg-white flex text-[#444]">
            <div className="w-[30px] leading-[26px] text-center -ml-[1px]">刀路</div>
            <div className="ml-[15px] w-[31px] leading-[26px] text-center">实体</div>
            <div className="ml-[16px] w-[31px] leading-[26px] text-center">平面</div>
            <div className="ml-[15px] w-[31px] leading-[26px] text-center">层别</div>
            <div className="ml-[7px] w-[90px] h-[26px] leading-[24px] text-center border-2 border-t-0 border-[#c5c5c5] whitespace-nowrap">三曲面熔接</div>
            <div className="ml-[10px] leading-[26px] whitespace-nowrap">最近使用功能</div>
          </div>
        </div>

        {/* Right */}
        <div className="flex-1 min-w-0 flex flex-col">
          <div className="h-[755px] shrink-0 relative overflow-hidden bg-[linear-gradient(180deg,#98a1ad_0%,#c6cad0_47%,#ffffff_100%)] border-b-2 border-[#a9a9a9]">
            <Scene />
            <FloatBar />
            <div className="absolute top-[21px] right-[7px] flex flex-col items-end gap-[8px]">
              {rightCol.map((c, i) => (
                <div key={i} className="flex gap-[2px]">
                  {i === 0 && (
                    <RoundBtn>
                      <circle cx="21" cy="21" r="6" fill="none" stroke="#a48c5e" strokeWidth="5" strokeDasharray="4 1.500" />
                    </RoundBtn>
                  )}
                  {i === 1 && (
                    <RoundBtn>
                      <g fill="none" stroke="#d06a6a" strokeWidth="2.500"><circle cx="21" cy="21" r="9.500" /><path d="M14 14l14 14" /></g>
                    </RoundBtn>
                  )}
                  <RoundBtn>{c}</RoundBtn>
                </div>
              ))}
            </div>
            {/* Nav widgets */}
            <div className="absolute left-[8px] top-[658px] w-[21px] h-[59px] rounded-full border-2 border-[#c2c7cd] bg-white/40 flex flex-col items-center justify-center gap-[3px]">
              <svg width="12" height="22" viewBox="0 0 12 22" className="block"><path d="M6 21V6M1 8l5-7 5 7z" fill="#4f86bd" stroke="#4f86bd" /></svg>
              <svg width="12" height="22" viewBox="0 0 12 22" className="block"><path d="M6 1v15M1 14l5 7 5-7z" fill="#4f86bd" stroke="#4f86bd" /></svg>
            </div>
            <div className="absolute left-[8px] top-[726px] w-[22px] h-[22px] rounded-full border-2 border-[#b5bac0] bg-white/50 flex items-center justify-center">
              <svg width="14" height="14" viewBox="0 0 14 14" className="block"><path d="M2 9a5 5 0 0 1 8-6M12 5a5 5 0 0 1-8 6" fill="none" stroke="#4f86bd" strokeWidth="1.800" /><path d="M8 1l4 1-1 4zM6 13l-4-1 1-4z" fill="#4f86bd" /></svg>
            </div>
            <div className="absolute left-[38px] top-[726px] w-[60px] h-[22px] rounded-full border-2 border-[#c2c7cd] bg-white/40 flex items-center justify-center gap-[3px]">
              <svg width="21" height="10" viewBox="0 0 21 10" className="block"><path d="M20 5H6M8 1L1 5l7 4z" fill="#4f86bd" stroke="#4f86bd" /></svg>
              <svg width="21" height="10" viewBox="0 0 21 10" className="block"><path d="M1 5h14M13 1l7 4-7 4z" fill="#4f86bd" stroke="#4f86bd" /></svg>
            </div>
            <div className="absolute left-[108px] top-[731px] text-[12px] font-bold leading-[16px] text-[#111]">俯视图</div>
            <div className="absolute left-[67px] top-[638px] w-[52px] h-[52px] flex items-center justify-center">
              <svg width="52" height="52" viewBox="0 0 52 52" className="absolute inset-0 block">
                <rect width="52" height="52" fill="#bfbfbf" />
                <path d="M13 2h26v5H13zM13 45h26v5H13zM2 13h5v26H2zM45 13h5v26h-5z" fill="#a6a6a6" />
                <path d="M2 2h10v3L5 12H2zM50 2H40v3l7 7h3zM2 50h10v-3l-7-7H2zM50 50H40v-3l7-7h3z" fill="#a0a0a0" />
              </svg>
              <span className="relative text-[11px] leading-[12px] text-[#111] whitespace-nowrap">俯视图</span>
            </div>
            <div className="absolute left-[60px] top-[615px] text-[13px] leading-[14px] font-bold text-[#008000] font-['Liberation_Sans',sans-serif]">Y</div>
            <div className="absolute left-[131px] top-[686px] text-[13px] leading-[14px] font-bold text-[#e00000] font-['Liberation_Sans',sans-serif]">X</div>
            {/* Scale */}
            <div className="absolute left-[1367px] top-[720px] w-[96px] h-[24px] border-x border-[#111]">
              <div className="h-[12px] border-b border-[#111] text-center text-[14px] leading-[11px] font-bold text-[#111] font-['Liberation_Serif','Noto_Sans_CJK_SC',serif] whitespace-nowrap">20.583 毫米</div>
            </div>
          </div>
          {/* View tabs */}
          <div className="h-[32px] shrink-0 pt-[4px] bg-white">
            <div className="h-[28px] border-t border-[#b0b0b0] flex items-start relative">
              <div className="w-[76px] h-[27px] border-2 border-t-0 border-[#c0c0c0] -mt-px bg-white font-bold text-[#222] text-center leading-[26px] whitespace-nowrap">视图单-1</div>
              <div className="ml-[11px] leading-[24px] text-[#444] text-[16px]">+</div>
              <div className="ml-auto mr-[6px] mt-[8px] flex gap-[13px]">
                <svg width="6" height="11" viewBox="0 0 6 11" className="block"><path d="M5 .5L1 5.500l4 5z" fill="none" stroke="#777" /></svg>
                <svg width="6" height="11" viewBox="0 0 6 11" className="block"><path d="M1 .5l4 5-4 5z" fill="none" stroke="#777" /></svg>
              </div>
            </div>
          </div>
        </div>
      </div>

      {/* Status */}
      <div className="h-[29px] shrink-0 bg-[#2b579a] text-[#e8eef7] text-[15px] flex items-center pl-[590px] whitespace-nowrap relative">
        <div className="w-[114px]">截面视图: 关闭</div>
        <div className="w-[183px]">选择的图素: 0</div>
        <div className="w-[32px]">X:</div>
        <div className="w-[97px]">174.90922</div>
        <div className="w-[26px]">Y:</div>
        <div className="w-[98px]">-72.19276</div>
        <div className="w-[27px]">Z:</div>
        <div className="w-[80px]">20.00000</div>
        <div className="w-[19px]"><Chev color="#a9bcd8" /></div>
        <div className="w-[37px]">3D</div>
        <div className="w-[128px]">绘图平面: 俯视图</div>
        <div className="w-[15px]"><Chev color="#a9bcd8" /></div>
        <div className="w-[128px]">刀具平面: 俯视图</div>
        <div className="w-[13px]"><Chev color="#a9bcd8" /></div>
        <div className="w-[103px]">WCS: 俯视图</div>
        <div className="w-[15px]"><Chev color="#a9bcd8" /></div>
        <div className="w-[34px] -ml-[2px] flex justify-center"><Globe kind={0} /></div>
        <div className="w-[34px] flex justify-center"><Globe kind={1} /></div>
        <div className="w-[34px] flex justify-center"><Globe kind={2} /></div>
        <div className="w-[35px] flex justify-center"><Globe kind={3} /></div>
        <div className="w-[33px] h-[29px] bg-[#0f5fcb] flex items-center justify-center"><Globe kind={4} /></div>
        <div className="w-[34px] flex justify-center"><Globe kind={3} /></div>
        <div className="absolute left-[1756px] top-[6px] text-[#c9d2df] text-[14px] tracking-[1px] leading-[18px]">UG爱好者论坛@小飞飞</div>
      </div>

      {/* Windows activation watermark */}
      <div className="absolute left-[1587px] top-[880px] text-[#9b9b9b]/70 pointer-events-none whitespace-nowrap">
        <div className="text-[25px] leading-[32px]">激活 Windows</div>
        <div className="text-[18px] leading-[24px] mt-[1px]">转到“设置”以激活 Windows。</div>
      </div>
    </div>
  );
}
